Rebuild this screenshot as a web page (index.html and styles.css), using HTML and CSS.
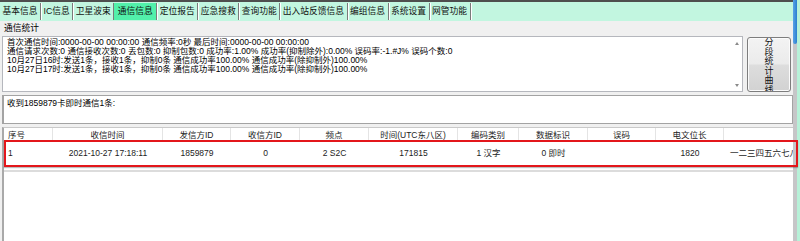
FILE: index.html
```html
<!DOCTYPE html>
<html lang="zh-CN">

<head>
    <meta charset="UTF-8">
    <title>通信信息</title>
    <link rel="stylesheet" href="styles.css">
</head>

<body>
    <div class="frame">
        <div class="main">
            <div class="topline"></div>
            <nav class="tabs">
                <span class="tab">基本信息</span>
                <span class="tab">IC信息</span>
                <span class="tab">卫星波束</span>
                <span class="tab active">通信信息</span>
                <span class="tab">定位报告</span>
                <span class="tab">应急搜救</span>
                <span class="tab">查询功能</span>
                <span class="tab">出入站反馈信息</span>
                <span class="tab">编组信息</span>
                <span class="tab">系统设置</span>
                <span class="tab">网管功能</span>
            </nav>
            <section class="panel">
                <div class="group-title">通信统计</div>
                <div class="stats-row">
                    <div class="stats-box">
                        <div class="stats-text">
                            <div>首次通信时间:0000-00-00 00:00:00 通信频率:0秒 最后时间:0000-00-00 00:00:00</div>
                            <div>通信请求次数:0 通信接收次数:0 丢包数:0 抑制包数:0 成功率:1.00% 成功率(抑制除外):0.00% 误码率:-1.#J% 误码个数:0</div>
                            <div>10月27日16时:发送1条，接收1条，抑制0条 通信成功率100.00% 通信成功率(除抑制外)100.00%</div>
                            <div>10月27日17时:发送1条，接收1条，抑制0条 通信成功率100.00% 通信成功率(除抑制外)100.00%</div>
                        </div>
                        <div class="vscroll">
                            <span class="arrow up"></span>
                            <span class="arrow down"></span>
                        </div>
                    </div>
                    <button class="curve-btn" type="button"><span>分段统计曲线</span></button>
                </div>
                <div class="msg-box">收到1859879卡即时通信1条:</div>
                <div class="list">
                    <div class="list-body">
                        <div class="list-head">
                            <span class="c1 left">序号</span>
                            <span class="c2">收信时间</span>
                            <span class="c3">发信方ID</span>
                            <span class="c4">收信方ID</span>
                            <span class="c5">频点</span>
                            <span class="c6">时间(UTC东八区)</span>
                            <span class="c7">编码类别</span>
                            <span class="c8">数据标识</span>
                            <span class="c9">误码</span>
                            <span class="c10">电文位长</span>
                            <span class="c11"></span>
                        </div>
                        <div class="list-row">
                            <span class="c1 left">1</span>
                            <span class="c2">2021-10-27 17:18:11</span>
                            <span class="c3">1859879</span>
                            <span class="c4">0</span>
                            <span class="c5">2 S2C</span>
                            <span class="c6">171815</span>
                            <span class="c7">1 汉字</span>
                            <span class="c8">0 即时</span>
                            <span class="c9"></span>
                            <span class="c10">1820</span>
                            <span class="c11 left">一二三四五六七八</span>
                        </div>
                    </div>
                    <div class="mark"></div>
                </div>
            </section>
        </div>
        <div class="side-scroll">
            <div class="thumb"></div>
        </div>
        <div class="edge"></div>
    </div>
</body>

</html>
```

FILE: styles.css
```css
* {
    box-sizing: border-box;
}

body {
    margin: 0;
    width: 800px;
    height: 241px;
    overflow: hidden;
    background-color: #c2f6e0;
    font-family: "Liberation Sans", "Noto Sans CJK SC", sans-serif;
    font-size: 8.5px;
    color: #000;
}

.frame {
    display: flex;
    height: 241px;
}

.main {
    width: 793px;
    display: flex;
    flex-direction: column;
}

.topline {
    height: 2px;
    background-color: #4e4e4e;
}

/* tab strip */
.tabs {
    display: flex;
    height: 19px;
    padding-top: 1px;
    background-color: #c2f6e0;
}

.tab {
    height: 17px;
    padding: 0 2.5px;
    font-size: 8.75px;
    line-height: 17px;
    color: #111;
    white-space: nowrap;
    border-right: 1px solid #7a7a7a;
    box-shadow: 1px 0 0 #ffffff;
}

.tab.active {
    background-color: #52f0aa;
    padding: 0 3.5px;
}

/* panel */
.panel {
    flex: 1;
    display: flex;
    flex-direction: column;
    background-color: #f0f0f0;
    padding-left: 2px;
}

.group-title {
    height: 15px;
    line-height: 15px;
    padding-left: 2px;
    font-size: 8.75px;
}

.stats-row {
    display: flex;
    gap: 4px;
    height: 56px;
}

.stats-box {
    width: 741px;
    display: flex;
    background-color: #fff;
    border: 1px solid #b5b7bd;
}

.stats-text {
    flex: 1;
    padding: 1px 0 0 4px;
    line-height: 9px;
    white-space: nowrap;
    overflow: hidden;
}

.vscroll {
    width: 10px;
    display: flex;
    flex-direction: column;
    justify-content: space-between;
    align-items: center;
    padding: 5px 0 4px;
}

.arrow {
    width: 0;
    height: 0;
    border-left: 2.5px solid transparent;
    border-right: 2.5px solid transparent;
}

.arrow.up {
    border-bottom: 3px solid #8a8a8a;
}

.arrow.down {
    border-top: 3px solid #8a8a8a;
}

.curve-btn {
    width: 44px;
    height: 55px;
    margin-top: 1px;
    padding: 0;
    display: flex;
    justify-content: center;
    align-items: flex-start;
    overflow: hidden;
    font-family: inherit;
    font-size: 9px;
    color: #111;
    border: 1px solid #7d7d7d;
    border-radius: 3px;
    background: linear-gradient(#f3f3f3 0%, #ebebeb 48%, #dddddd 52%, #d2d2d2 100%);
    box-shadow: inset 0 0 0 1px #fbfbfb;
}

.curve-btn span {
    width: 10px;
    line-height: 9.6px;
    text-align: center;
    word-break: break-all;
    margin-top: 0;
}

.msg-box {
    width: 791px;
    height: 29px;
    margin-top: 3px;
    padding: 3px 0 0 3px;
    background-color: #fff;
    border: 1px solid #a3a3a3;
    border-left-width: 2px;
    line-height: 9px;
}

/* list view */
.list {
    position: relative;
    flex: 1;
    width: 791px;
    margin-top: 3px;
    background-color: #fff;
    border-top: 1px solid #c9c9c9;
    border-left: 2px solid #a9a9a9;
}

.list-body {
    height: 100%;
    overflow: hidden;
}

.list-head,
.list-row {
    display: grid;
    grid-template-columns: 49px 110px 68px 69px 69px 89px 61px 69px 68px 68px 70px;
    white-space: nowrap;
    color: #1c1c1c;
}

.list-head {
    height: 13px;
    line-height: 15px;
}

.list-head span {
    text-align: center;
    border-right: 1px solid #e4e4e4;
    overflow: hidden;
}

.list-row {
    height: 31px;
    padding-top: 7px;
    line-height: 11px;
    border-bottom: 2px solid #dcdcdc;
}

.list-row span {
    text-align: center;
    overflow: hidden;
}

.list-head .left,
.list-row .left {
    text-align: left;
    padding-left: 4px;
}

.list-row .c11 {
    padding-left: 6px;
}

/* red marker drawn over the selected row */
.mark {
    position: absolute;
    top: 12px;
    left: 0;
    right: -5px;
    height: 27px;
    border: 2px solid #e3161b;
    box-shadow: 0 1px 1px rgba(0, 0, 0, 0.25);
}

/* outer scrollbar */
.side-scroll {
    width: 4px;
    background-color: #c6c6c8;
}

.thumb {
    height: 44px;
    background: linear-gradient(90deg, #5aa3e6, #2a7fd0);
    border-radius: 0 0 2px 2px;
}

.edge {
    width: 3px;
    background-color: #b7f1d8;
}
```
